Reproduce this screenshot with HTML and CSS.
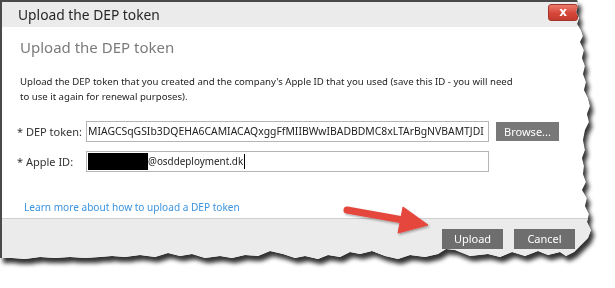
FILE: index.html
```html
<!DOCTYPE html>
<html>
<head>
<meta charset="utf-8">
<link rel="stylesheet" href="styles.css">
</head>
<body>
<div class="stage">
  <div class="shadow-wrap">
    <div class="dialog">
      <div class="titlebar">
        <span class="title">Upload the DEP token</span>
        <span class="close">x</span>
      </div>
      <div class="content">
        <h1 class="heading">Upload the DEP token</h1>
        <p class="intro">Upload the DEP token that you created and the company's Apple ID that you used (save this ID - you will need<br>to use it again for renewal purposes).</p>
        <div class="form">
          <div class="row">
            <span class="label">* DEP token:</span>
            <div class="input">MIAGCSqGSIb3DQEHA6CAMIACAQxggFfMIIBWwIBADBDMC8xLTArBgNVBAMTJDI</div>
            <span class="browse">Browse...</span>
          </div>
          <div class="row">
            <span class="label">* Apple ID:</span>
            <div class="input"><span class="redact"></span><span class="email">@osddeployment.dk</span><span class="caret"></span></div>
          </div>
        </div>
        <a class="learn">Learn more about how to upload a DEP token</a>
      </div>
      <div class="footer">
        <span class="btn">Upload</span>
        <span class="btn">Cancel</span>
      </div>
    </div>
  </div>
  <svg class="arrow" width="615" height="288" viewBox="0 0 615 288">
    <defs>
      <filter id="as" x="-20%" y="-20%" width="140%" height="140%">
        <feDropShadow dx="1" dy="1.5" stdDeviation="1" flood-color="#000" flood-opacity="0.35"/>
      </filter>
    </defs>
    <g filter="url(#as)" fill="#e5463d" stroke="#e5463d">
      <line x1="347" y1="210" x2="406" y2="220.5" stroke-width="7" stroke-linecap="round"/>
      <polygon points="403,207 428,225 398,233" stroke-width="1" stroke-linejoin="round"/>
    </g>
  </svg>
</div>
</body>
</html>
```
FILE: styles.css
```css
* { box-sizing: border-box; }
html, body { margin: 0; padding: 0; background: #fff; }
body { font-family: "Noto Sans", "Open Sans", sans-serif; color: #222; }

.stage { position: relative; width: 615px; height: 288px; overflow: hidden; }

.shadow-wrap {
  width: 600px;
  filter: drop-shadow(0 0 0.6px #111) drop-shadow(3px 5px 2px rgba(0,0,0,0.8));
}

.dialog {
  width: 600px;
  height: 275px;
  background: #fff;
  border-left: 2px solid #4a4a4a;
  border-top: 2px solid #4a4a4a;
  display: flex;
  flex-direction: column;
  clip-path: polygon(0 0, 577px 0, 578px 6px, 576px 12px, 579px 18px, 577px 24px, 581px 30px, 583px 36px, 580px 42px, 584px 50px, 582px 58px, 585px 66px, 583px 74px, 586px 82px, 584px 90px, 588px 98px, 590px 106px, 587px 114px, 589px 122px, 585px 130px, 583px 140px, 585px 150px, 582px 158px, 584px 166px, 583px 174px, 586px 182px, 582px 190px, 587px 198px, 585px 206px, 589px 214px, 587px 222px, 591px 230px, 588px 238px, 580px 246px, 574px 252px, 566px 256px, 560px 252px, 548px 255px, 538px 251px, 525px 256px, 512px 252px, 500px 257px, 488px 254px, 470px 256px, 455px 250px, 446px 249px, 438px 254px, 425px 257px, 410px 255px, 398px 259px, 385px 256px, 372px 251px, 360px 254px, 350px 252px, 340px 257px, 328px 255px, 318px 259px, 305px 256px, 295px 258px, 283px 254px, 270px 251px, 258px 256px, 245px 255px, 232px 258px, 220px 256px, 205px 258px, 192px 254px, 180px 256px, 168px 253px, 155px 257px, 140px 255px, 125px 257px, 112px 256px, 100px 257px, 85px 258px, 70px 257px, 55px 258px, 40px 257px, 25px 259px, 12px 258px, 0 258px);
}

.titlebar {
  height: 25px;
  flex: none;
  background: #ebebeb;
  display: flex;
  align-items: center;
  justify-content: space-between;
  padding: 0 22px 0 16px;
}
.title { font-size: 13.8px; color: #262626; }
.close {
  width: 30px;
  height: 17px;
  margin-top: -4px;
  border-radius: 3px;
  border: 1px solid #a3342a;
  background: linear-gradient(#ec7a6b, #d6473a 55%, #c53a2e);
  color: #fff;
  font: bold 12px/14px "DejaVu Sans", sans-serif;
  text-align: center;
}

.content { flex: none; height: 191px; padding: 10px 0 0 0; }
.heading {
  margin: 0 0 17px 0;
  padding-left: 18px;
  font-size: 15px;
  line-height: 20px;
  font-weight: normal;
  color: #7b7b7b;
}
.intro {
  margin: 0 0 17px 0;
  padding-left: 18px;
  font-size: 9.6px;
  line-height: 15px;
  color: #1e1e1e;
  white-space: nowrap;
}
.form { display: flex; flex-direction: column; gap: 9px; padding-left: 15px; }
.row { display: grid; grid-template-columns: 69px 403px 70px; align-items: center; height: 21px; }
.label { font-size: 11px; color: #333; white-space: nowrap; }
.input {
  height: 21px;
  border: 1px solid #b5b5b5;
  background: #fff;
  font-size: 10.4px;
  line-height: 19px;
  padding: 0 2px 0 1px;
  white-space: nowrap;
  overflow: hidden;
  display: flex;
  align-items: center;
  color: #222;
}
.email { font-size: 9.9px; }
.redact { width: 60px; height: 17px; background: #000; flex: none; }
.caret { width: 1px; height: 15px; background: #000; margin-left: 1px; }
.browse {
  margin-left: 7px;
  height: 19px;
  background: #787878;
  color: #fff;
  font-size: 11px;
  line-height: 19px;
  text-align: center;
}
.learn {
  display: block;
  margin-top: 28px;
  padding-left: 22px;
  font-size: 10.1px;
  line-height: 15px;
  color: #3b93e0;
}

.footer {
  flex: 1;
  background: #ebebeb;
  border-top: 1px solid #cfcfcf;
  display: flex;
  justify-content: flex-end;
  align-items: flex-start;
  gap: 11px;
  padding: 10px 25px 0 0;
}
.btn {
  width: 61px;
  height: 20px;
  background: #6e6e6e;
  color: #fff;
  font-size: 11px;
  line-height: 20px;
  text-align: center;
}

.arrow { position: absolute; left: 0; top: 0; pointer-events: none; }
```
